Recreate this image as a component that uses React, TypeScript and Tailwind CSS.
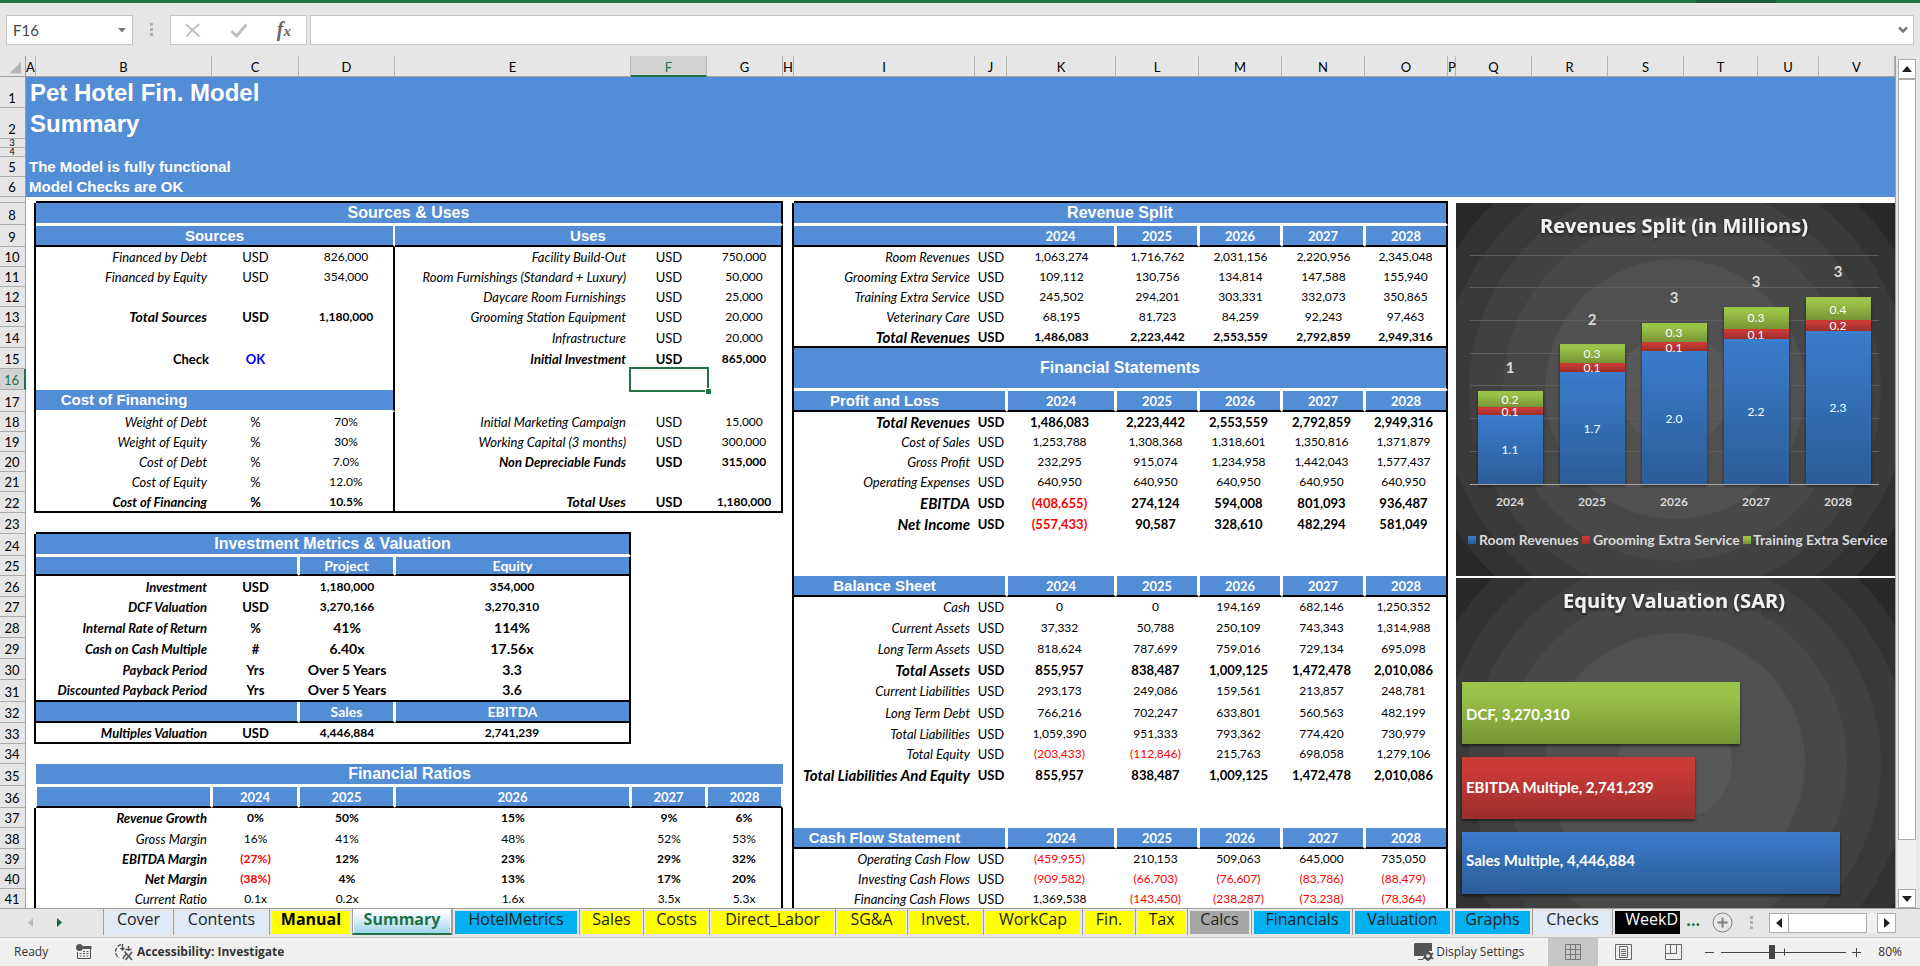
import type { ReactNode } from "react";

type Cell = { t?: ReactNode; c?: string; s?: number; r?: number };

const BLUE = "bg-[#538dd5] text-white font-bold";
const TITLE = "bg-[#538dd5] text-white font-bold text-center font-['Liberation_Sans',sans-serif]";
const LABEL = "text-right italic pr-[5px]";
const NUM = "text-center";
const ACC = "text-center pr-1";
const RIGHT_EDGE = "border-r-2 border-r-black";

const columns: [string, string][] = [
  ["A", "w-[10px]"],
  ["B", "w-[176px]"],
  ["C", "w-[87px]"],
  ["D", "w-[96px]"],
  ["E", "w-[236px]"],
  ["F", "w-[76px]"],
  ["G", "w-[76px]"],
  ["H", "w-[11px]"],
  ["I", "w-[181px]"],
  ["J", "w-[32px]"],
  ["K", "w-[109px]"],
  ["L", "w-[83px]"],
  ["M", "w-[83px]"],
  ["N", "w-[83px]"],
  ["O", "w-[83px]"],
  ["P", "w-[8px]"],
  ["Q", "w-[76px]"],
  ["R", "w-[76px]"],
  ["S", "w-[76px]"],
  ["T", "w-[74px]"],
  ["U", "w-[61px]"],
  ["V", ""],
];

const tall = "h-[22px]";
const mid = "h-[21px]";
const low = "h-[20px]";
const rowHeights: Record<number, string> = {
  1: "h-[31px]", 2: "h-[31px]", 3: "h-[9px]", 4: "h-[9px]", 5: low, 6: low, 7: "h-[6px]",
  8: tall, 9: tall, 10: low, 11: low, 12: low, 13: low, 14: mid, 15: mid, 16: mid, 17: tall,
  18: low, 19: low, 20: low, 21: low, 22: mid, 23: mid, 24: tall, 25: low, 26: mid, 27: low,
  28: mid, 29: mid, 30: mid, 31: tall, 32: mid, 33: mid, 34: low, 35: tall, 36: tall, 37: low,
  38: mid, 39: low, 40: low, 41: low,
};

const years = ["2024", "2025", "2026", "2027", "2028"];

/* ---------- left block: columns B to G ---------- */

const B = "font-bold";
const triple = (label: string, unit: string, value: string, bold?: string, edge?: string): Cell[] => [
  { t: label, c: `${LABEL} ${bold ?? ""} ${label.startsWith("Total") ? "text-[14px]" : "text-[13px]"}` },
  { t: unit, c: `${NUM} text-[13px] ${bold ?? ""}` },
  { t: value, c: `${NUM} ${bold ?? ""} ${edge ?? ""}` },
];
const none = (edge: string): Cell[] => [{}, {}, { c: edge }];
const src = (l: string, u: string, v: string, b?: string) => triple(l, u, v, b, RIGHT_EDGE);
const metric = (label: string, unit: string, project: string, equity: string, size?: string): Cell[] => [
  { t: label, c: `${LABEL} text-[13px] font-bold` },
  { t: unit, c: `${NUM} text-[13px] font-bold` },
  { t: project, c: `${NUM} font-bold ${size ?? ""}` },
  { t: equity, c: `${NUM} font-bold ${size ?? ""} ${RIGHT_EDGE}` },
  { s: 2 },
];
const ratio = (label: string, values: string[], bold?: string): Cell[] => [
  { t: label, c: `${LABEL} text-[13px] ${bold ?? ""}` },
  ...values.map((v, i) => ({
    t: v,
    c: `${NUM} ${bold ?? ""} ${v.startsWith("(") ? "text-[#ff0000]" : ""} ${i === 4 ? RIGHT_EDGE : ""}`,
  })),
];
const SUB = `${BLUE} text-center text-[13px] border-b-2 border-b-black`;
const SUB_WIDE = `${BLUE} text-center text-[14px] border-b-2 border-b-black`;

const left: Record<number, Cell[]> = {
  7: [{ s: 6, c: "border-b-2 border-b-black" }],
  8: [{ t: "Sources & Uses", s: 6, c: `${TITLE} text-[16px] border-b-2 border-b-white ${RIGHT_EDGE}` }],
  9: [
    { t: "Sources", s: 3, c: `${TITLE} text-[15px] border-t border-t-white border-b-2 border-b-black border-r-2 border-r-white` },
    { t: "Uses", s: 3, c: `${TITLE} text-[15px] border-t border-t-white border-b-2 border-b-black ${RIGHT_EDGE}` },
  ],
  10: [...src("Financed by Debt", "USD", "826,000"), ...src("Facility Build-Out", "USD", "750,000")],
  11: [...src("Financed by Equity", "USD", "354,000"), ...src("Room Furnishings (Standard + Luxury)", "USD", "50,000")],
  12: [...none(RIGHT_EDGE), ...src("Daycare Room Furnishings", "USD", "25,000")],
  13: [...src("Total Sources", "USD", "1,180,000", B), ...src("Grooming Station Equipment", "USD", "20,000")],
  14: [...none(RIGHT_EDGE), ...src("Infrastructure", "USD", "20,000")],
  15: [
    { t: "Check", c: "text-right font-bold pr-[3px] text-[13px]" },
    { t: "OK", c: `${NUM} text-[13px] font-bold text-[#0000ff]` },
    { c: RIGHT_EDGE },
    ...src("Initial Investment", "USD", "865,000", B),
  ],
  16: [
    ...none(RIGHT_EDGE),
    {},
    {
      c: "relative",
      t: (
        <span className="absolute -inset-0.5 z-10 border-2 border-[#217346]">
          <span className="absolute -right-1 -bottom-1 size-[6px] border-t border-l border-white bg-[#217346]" />
        </span>
      ),
    },
    { c: RIGHT_EDGE },
  ],
  17: [
    { t: "Cost of Financing", c: `${TITLE} text-[15px] border-b-2 border-b-white` },
    { s: 2, c: `bg-[#538dd5] border-b-2 border-b-white ${RIGHT_EDGE}` },
    ...none(RIGHT_EDGE),
  ],
  18: [...src("Weight of Debt", "%", "70%"), ...src("Initial Marketing Campaign", "USD", "15,000")],
  19: [...src("Weight of Equity", "%", "30%"), ...src("Working Capital (3 months)", "USD", "300,000")],
  20: [...src("Cost of Debt", "%", "7.0%"), ...src("Non Depreciable Funds", "USD", "315,000", B)],
  21: [...src("Cost of Equity", "%", "12.0%"), ...none(RIGHT_EDGE)],
  22: [...src("Cost of Financing", "%", "10.5%", B), ...src("Total Uses", "USD", "1,180,000", B)].map((x) => ({
    ...x,
    c: `${x.c} border-b-2 border-b-black`,
  })),
  23: [{ s: 4, c: "border-b-2 border-b-black" }, { s: 2 }],
  24: [
    { t: "Investment Metrics & Valuation", s: 4, c: `${TITLE} text-[16px] border-b-2 border-b-white ${RIGHT_EDGE}` },
    { s: 2 },
  ],
  25: [
    { s: 2, c: `${SUB_WIDE} border-t border-t-white border-r-2 border-r-white` },
    { t: "Project", c: `${SUB_WIDE} border-t border-t-white border-x-2 border-l border-x-white` },
    { t: "Equity", c: `${SUB_WIDE} border-t border-t-white border-l border-l-white ${RIGHT_EDGE}` },
    { s: 2 },
  ],
  26: metric("Investment", "USD", "1,180,000", "354,000"),
  27: metric("DCF Valuation", "USD", "3,270,166", "3,270,310"),
  28: metric("Internal Rate of Return", "%", "41%", "114%", "text-[14px]"),
  29: metric("Cash on Cash Multiple", "#", "6.40x", "17.56x", "text-[14px]"),
  30: metric("Payback Period", "Yrs", "Over 5 Years", "3.3", "text-[14px]"),
  31: metric("Discounted Payback Period", "Yrs", "Over 5 Years", "3.6", "text-[14px]").map((x, i) =>
    i < 4 ? { ...x, c: `${x.c} border-b-2 border-b-black` } : x
  ),
  32: [
    { s: 2, c: `${SUB_WIDE} border-r-2 border-r-white` },
    { t: "Sales", c: `${SUB_WIDE} border-x-2 border-l border-x-white` },
    { t: "EBITDA", c: `${SUB_WIDE} border-l border-l-white ${RIGHT_EDGE}` },
    { s: 2 },
  ],
  33: metric("Multiples Valuation", "USD", "4,446,884", "2,741,239").map((x, i) =>
    i < 4 ? { ...x, c: `${x.c} border-b-2 border-b-black` } : x
  ),
  34: [{ s: 6 }],
  35: [{ t: "Financial Ratios", s: 6, c: `${TITLE} text-[16px] border-b-2 border-b-white` }],
  36: [
    { c: `${SUB} border-t border-t-white border-x-2 border-l border-x-white` },
    ...years.map((y) => ({ t: y, c: `${SUB} border-t border-t-white border-x-2 border-l border-x-white` })),
  ],
  37: ratio("Revenue Growth", ["0%", "50%", "15%", "9%", "6%"], B),
  38: ratio("Gross Margin", ["16%", "41%", "48%", "52%", "53%"]),
  39: ratio("EBITDA Margin", ["(27%)", "12%", "23%", "29%", "32%"], B),
  40: ratio("Net Margin", ["(38%)", "4%", "13%", "17%", "20%"], B),
  41: ratio("Current Ratio", ["0.1x", "0.2x", "1.6x", "3.5x", "5.3x"]),
};

/* ---------- right block: columns I to O ---------- */

const line = (label: string, text: string, opt: { bold?: boolean; plain?: boolean; end?: boolean } = {}): Cell[] => {
  const w = opt.bold ? (opt.plain ? "font-bold" : "font-bold text-[13px]") : "";
  const lw = opt.bold ? "font-bold text-[15px]" : "text-[13px]";
  const e = opt.end ? "border-b-2 border-b-black" : "";
  return [
    { t: label, c: `${LABEL} ${lw} ${e}` },
    { t: "USD", c: `${NUM} text-[13px] ${opt.bold ? "font-bold" : ""} ${e}` },
    ...text.split(" ").map((v, i) => ({
      t: v,
      c: `${opt.plain ? NUM : ACC} ${w} ${e} ${v.startsWith("(") ? "text-[#ff0000]" : ""} ${i === 4 ? RIGHT_EDGE : ""}`,
    })),
  ];
};
const head = (title: string, top: string): Cell[] => [
  { t: title, c: `${TITLE} text-[15px] border-b-2 border-b-black ${top}` },
  { c: `bg-[#538dd5] border-b-2 border-b-black border-r-2 border-r-white ${top}` },
  ...years.map((y, i) => ({
    t: y,
    c: `${SUB} ${top} border-l border-l-white ${i === 4 ? RIGHT_EDGE : "border-r-2 border-r-white"}`,
  })),
];
const gap: Cell[] = [{ s: 7, c: RIGHT_EDGE }];

const right: Record<number, Cell[]> = {
  7: [{ s: 7, c: "border-b-2 border-b-black" }],
  8: [{ t: "Revenue Split", s: 7, c: `${TITLE} text-[16px] border-b-2 border-b-white ${RIGHT_EDGE}` }],
  9: [
    { s: 2, c: "bg-[#538dd5] border-t border-t-white border-b-2 border-b-black" },
    ...years.map((y, i) => ({
      t: y,
      c: `${SUB} border-t border-t-white ${i > 0 ? "border-l border-l-white" : ""} ${i === 4 ? RIGHT_EDGE : "border-r-2 border-r-white"}`,
    })),
  ],
  10: line("Room Revenues", "1,063,274 1,716,762 2,031,156 2,220,956 2,345,048", { plain: true }),
  11: line("Grooming Extra Service", "109,112 130,756 134,814 147,588 155,940", { plain: true }),
  12: line("Training Extra Service", "245,502 294,201 303,331 332,073 350,865", { plain: true }),
  13: line("Veterinary Care", "68,195 81,723 84,259 92,243 97,463", { plain: true }),
  14: line("Total Revenues", "1,486,083 2,223,442 2,553,559 2,792,859 2,949,316", { plain: true, bold: true, end: true }),
  15: [{ t: "Financial Statements", s: 7, r: 2, c: `${TITLE} text-[16px] border-b-2 border-b-white ${RIGHT_EDGE}` }],
  16: [],
  17: head("Profit and Loss", "border-t border-t-white"),
  18: line("Total Revenues", "1,486,083 2,223,442 2,553,559 2,792,859 2,949,316", { bold: true }),
  19: line("Cost of Sales", "1,253,788 1,308,368 1,318,601 1,350,816 1,371,879"),
  20: line("Gross Profit", "232,295 915,074 1,234,958 1,442,043 1,577,437"),
  21: line("Operating Expenses", "640,950 640,950 640,950 640,950 640,950"),
  22: line("EBITDA", "(408,655) 274,124 594,008 801,093 936,487", { bold: true }),
  23: line("Net Income", "(557,433) 90,587 328,610 482,294 581,049", { bold: true }),
  24: gap,
  25: gap,
  26: head("Balance Sheet", ""),
  27: line("Cash", "0 0 194,169 682,146 1,250,352"),
  28: line("Current Assets", "37,332 50,788 250,109 743,343 1,314,988"),
  29: line("Long Term Assets", "818,624 787,699 759,016 729,134 695,098"),
  30: line("Total Assets", "855,957 838,487 1,009,125 1,472,478 2,010,086", { bold: true }),
  31: line("Current Liabilities", "293,173 249,086 159,561 213,857 248,781"),
  32: line("Long Term Debt", "766,216 702,247 633,801 560,563 482,199"),
  33: line("Total Liabilities", "1,059,390 951,333 793,362 774,420 730,979"),
  34: line("Total Equity", "(203,433) (112,846) 215,763 698,058 1,279,106"),
  35: line("Total Liabilities And Equity", "855,957 838,487 1,009,125 1,472,478 2,010,086", { bold: true }),
  36: gap,
  37: gap,
  38: head("Cash Flow Statement", ""),
  39: line("Operating Cash Flow", "(459,955) 210,153 509,063 645,000 735,050"),
  40: line("Investing Cash Flows", "(909,582) (66,703) (76,607) (83,786) (88,479)"),
  41: line("Financing Cash Flows", "1,369,538 (143,450) (238,287) (73,238) (78,364)"),
};

const banner: Record<number, [string, string]> = {
  1: ["Pet Hotel Fin. Model", "text-[24px] leading-7 pl-1"],
  2: ["Summary", "text-[24px] leading-7 pl-1"],
  3: ["", ""],
  4: ["", ""],
  5: ["The Model is fully functional", "text-[15px] pl-[3px]"],
  6: ["Model Checks are OK", "text-[15px] pl-[3px]"],
};

const aEdge = (n: number) => (n >= 8 && n <= 22) || (n >= 24 && n <= 33) || n >= 37;

/* ---------- charts ---------- */

function Gradients({ id }: { id: string }) {
  return (
    <defs>
      <linearGradient id={`${id}-blue`} x1="0" y1="0" x2="0" y2="1">
        <stop offset="0" stopColor="#3a7ccb" />
        <stop offset="1" stopColor="#2c5d98" />
      </linearGradient>
      <linearGradient id={`${id}-red`} x1="0" y1="0" x2="0" y2="1">
        <stop offset="0.2" stopColor="#cb3a36" />
        <stop offset="1" stopColor="#9b2d2a" />
      </linearGradient>
      <linearGradient id={`${id}-green`} x1="0" y1="0" x2="0" y2="1">
        <stop offset="0.2" stopColor="#9bc348" />
        <stop offset="1" stopColor="#769535" />
      </linearGradient>
      <filter id={`${id}-shadow`} x="-10%" y="-10%" width="120%" height="130%">
        <feDropShadow dx="0" dy="2" stdDeviation="1.5" floodColor="#000000" floodOpacity="0.55" />
      </filter>
    </defs>
  );
}

function Rings({ cy }: { cy: number }) {
  const rings: [number, string][] = [
    [260, "#323232"],
    [234, "#3a3a3a"],
    [206, "#414141"],
    [172, "#484848"],
    [130, "#505050"],
    [57, "#585858"],
  ];
  return (
    <g>
      <rect width="439" height="400" fill="#282828" />
      {rings.map(([r, fill]) => (
        <circle key={r} cx="219" cy={cy} r={r} fill={fill} />
      ))}
    </g>
  );
}

const bars = [
  { x: 22, year: "2024", tops: [188, 204, 212], v: ["0.2", "0.1", "1.1"], ly: [197, 209, 247], total: "1", ty: 165 },
  { x: 104, year: "2025", tops: [141, 160, 169], v: ["0.3", "0.1", "1.7"], ly: [151, 165, 226], total: "2", ty: 117 },
  { x: 186, year: "2026", tops: [120, 139, 148], v: ["0.3", "0.1", "2.0"], ly: [130, 145, 216], total: "3", ty: 95 },
  { x: 268, year: "2027", tops: [104, 126, 136], v: ["0.3", "0.1", "2.2"], ly: [115, 132, 209], total: "3", ty: 79 },
  { x: 350, year: "2028", tops: [94, 117, 128], v: ["0.4", "0.2", "2.3"], ly: [107, 123, 205], total: "3", ty: 69 },
];

const CHART_TITLE = "font-['Open_Sans',sans-serif] text-[20px] font-bold";

function RevenueChart() {
  return (
    <svg viewBox="0 0 439 373" className="block h-[373px] w-full" role="img" aria-label="Revenues Split (in Millions)">
      <Gradients id="rev" />
      <Rings cy={186} />
      <g stroke="#5e5e5e">
        {[52, 84, 117, 150, 182, 215, 248].map((y) => (
          <line key={y} x1="14" x2="423" y1={y + 0.5} y2={y + 0.5} />
        ))}
      </g>
      <text x="218" y="30" className={CHART_TITLE} fill="#f2f2f2" textAnchor="middle" filter="url(#rev-shadow)">
        Revenues Split (in Millions)
      </text>
      {bars.map((b) => (
        <g key={b.year} textAnchor="middle">
          <g filter="url(#rev-shadow)">
            <rect x={b.x} y={b.tops[0]} width="65" height={b.tops[1] - b.tops[0]} fill="url(#rev-green)" />
            <rect x={b.x} y={b.tops[1]} width="65" height={b.tops[2] - b.tops[1]} fill="url(#rev-red)" />
            <rect x={b.x} y={b.tops[2]} width="65" height={281 - b.tops[2]} fill="url(#rev-blue)" />
          </g>
          <g fontSize="12" fill="#ffffff">
            {b.v.map((v, i) => (
              <text key={i} x={b.x + 32} y={b.ly[i] + 4}>
                {v}
              </text>
            ))}
          </g>
          <g fontWeight="700" fill="#d9d9d9">
            <text x={b.x + 32} y={b.ty + 5} fontSize="15">
              {b.total}
            </text>
            <text x={b.x + 32} y="303" fontSize="12">
              {b.year}
            </text>
          </g>
        </g>
      ))}
      <line x1="14" x2="423" y1="281.5" y2="281.5" stroke="#a6a6a6" />
      <g fontSize="14" fontWeight="700" fill="#d9d9d9">
        <rect x="12" y="333" width="8" height="8" fill="url(#rev-blue)" />
        <text x="23" y="342">Room Revenues</text>
        <rect x="126" y="333" width="8" height="8" fill="url(#rev-red)" />
        <text x="137" y="342">Grooming Extra Service</text>
        <rect x="287" y="333" width="8" height="8" fill="url(#rev-green)" />
        <text x="297" y="342">Training Extra Service</text>
      </g>
    </svg>
  );
}

function EquityChart() {
  const items = [
    { y: 104, ty: 142, w: 278, fill: "url(#eq-green)", label: "DCF, 3,270,310" },
    { y: 179, ty: 215, w: 233, fill: "url(#eq-red)", label: "EBITDA Multiple, 2,741,239" },
    { y: 254, ty: 288, w: 378, fill: "url(#eq-blue)", label: "Sales Multiple, 4,446,884" },
  ];
  return (
    <svg viewBox="0 0 439 331" className="block h-[331px] w-full" role="img" aria-label="Equity Valuation (SAR)">
      <Gradients id="eq" />
      <Rings cy={185} />
      <text x="218" y="30" className={CHART_TITLE} fill="#f2f2f2" textAnchor="middle" filter="url(#eq-shadow)">
        Equity Valuation (SAR)
      </text>
      {items.map((b) => (
        <g key={b.label}>
          <rect x="6" y={b.y} width={b.w} height="62" fill={b.fill} filter="url(#eq-shadow)" />
          <text x="10" y={b.ty} fontSize="15" fontWeight="700" fill="#ffffff">
            {b.label}
          </text>
        </g>
      ))}
    </svg>
  );
}

/* ---------- sheet ---------- */

function Cells({ cells }: { cells: Cell[] }) {
  return (
    <>
      {cells.map((x, i) => (
        <td key={i} colSpan={x.s} rowSpan={x.r} className={`p-0 leading-4 whitespace-nowrap ${x.c ?? ""}`}>
          {x.t}
        </td>
      ))}
    </>
  );
}

function RowHeader({ n }: { n: number }) {
  const selected = n === 16;
  const tiny = n === 3 || n === 4;
  return (
    <th
      scope="row"
      className={`p-0 pr-px text-center align-bottom text-[13px] font-normal border-b border-b-[#ababab] ${
        selected
          ? "border-r-2 border-r-[#217346] bg-[#d2d2d2] text-[#217346]"
          : "border-r border-r-[#9f9f9f] bg-[#e6e6e6] text-black"
      }`}
    >
      {n !== 7 && <div className={tiny ? "text-[9px] leading-[8px]" : "leading-[18px]"}>{n}</div>}
    </th>
  );
}

function Sheet() {
  return (
    <table className="w-full table-fixed border-separate border-spacing-0 bg-white text-[12px] text-black">
      <colgroup>
        <col className="w-[26px]" />
        {columns.map(([name, w]) => (
          <col key={name} className={w} />
        ))}
      </colgroup>
      <thead>
        <tr className="h-[21px] bg-[#e6e6e6]">
          <td className="border-r border-b border-[#9f9f9f] p-0">
            <svg viewBox="0 0 26 20" className="block h-[19px] w-full" aria-hidden="true">
              <path d="M22 5v12H10z" fill="#b4b4b4" />
            </svg>
          </td>
          {columns.map(([name]) => (
            <th
              key={name}
              scope="col"
              className={`px-0 pt-0.5 pb-0 text-center text-[13px] leading-4 font-normal border-r border-r-[#b4b4b4] ${
                name === "F"
                  ? "border-b-2 border-b-[#217346] bg-[#d2d2d2] text-[#217346]"
                  : "border-b border-b-[#9f9f9f]"
              }`}
            >
              {name}
            </th>
          ))}
        </tr>
      </thead>
      <tbody>
        {Object.keys(rowHeights).map((key) => {
          const n = Number(key);
          return (
            <tr key={n} className={rowHeights[n]}>
              <RowHeader n={n} />
              {banner[n] ? (
                <td
                  colSpan={22}
                  className={`bg-[#538dd5] p-0 font-['Liberation_Sans',sans-serif] leading-4 font-bold text-white ${banner[n][1]}`}
                >
                  {banner[n][0]}
                </td>
              ) : (
                <>
                  <td className={`p-0 ${aEdge(n) ? RIGHT_EDGE : ""}`} />
                  <Cells cells={left[n]} />
                  <td className={`p-0 ${n >= 8 ? RIGHT_EDGE : ""}`} />
                  <Cells cells={right[n]} />
                  <td className="p-0" />
                  {n === 7 && <td colSpan={6} className="p-0" />}
                  {n === 8 && (
                    <td colSpan={6} rowSpan={18} className="bg-[#282828] p-0 align-top">
                      <RevenueChart />
                    </td>
                  )}
                  {n === 26 && (
                    <td colSpan={6} rowSpan={16} className="border-t-2 border-t-white bg-[#282828] p-0 align-top">
                      <EquityChart />
                    </td>
                  )}
                </>
              )}
            </tr>
          );
        })}
      </tbody>
    </table>
  );
}

/* ---------- window chrome ---------- */

function FormulaBar() {
  return (
    <div className="flex h-[53px] shrink-0 items-start bg-[#e6e6e6] pt-3 pr-1.5 pl-1.5">
      <div className="flex h-[30px] w-[127px] items-center border border-[#c6c6c6] bg-white">
        <input aria-label="Name Box" defaultValue="F16" className="w-24 pl-1.5 text-[15px] text-[#444444] outline-none" />
        <button aria-label="Name list" className="ml-auto pr-1.5">
          <svg width="8" height="5" aria-hidden="true">
            <path d="M0 0h8L4 4.500z" fill="#777777" />
          </svg>
        </button>
      </div>
      <svg width="37" height="30" aria-hidden="true">
        <path d="M17 8h3v3h-3zM17 13h3v3h-3zM17 18h3v3h-3z" fill="#b0b0b0" />
      </svg>
      <div className="flex h-[30px] w-[137px] items-center justify-between border border-[#c6c6c6] bg-white pr-[15px] pl-3.5">
        <button aria-label="Cancel">
          <svg width="16" height="15" className="block" aria-hidden="true">
            <path d="M1 1.500c4 3 9 8 13.500 12M14.500 1C9 5 5 9 1.500 13.500" stroke="#c0c0c0" strokeWidth="2" fill="none" />
          </svg>
        </button>
        <button aria-label="Enter">
          <svg width="18" height="15" className="block" aria-hidden="true">
            <path d="M1.500 8l5 5L16.500 1.500" stroke="#c0c0c0" strokeWidth="3" fill="none" />
          </svg>
        </button>
        <button
          aria-label="Insert Function"
          className="font-['Liberation_Serif',serif] text-[20px] leading-5 font-bold text-[#666666] italic"
        >
          f<span className="text-[15px]">x</span>
        </button>
      </div>
      <div className="ml-[3px] flex h-[30px] flex-1 items-center border border-[#c6c6c6] bg-white">
        <input aria-label="Formula Bar" className="min-w-0 flex-1 px-2 text-[15px] outline-none" />
        <button aria-label="Expand Formula Bar" className="pr-[5px]">
          <svg width="10" height="8" aria-hidden="true">
            <path d="M1 1.500L5 5.500l4-4" stroke="#777777" strokeWidth="2.500" fill="none" />
          </svg>
        </button>
      </div>
    </div>
  );
}

function VerticalScroll() {
  return (
    <div className="flex w-[25px] shrink-0 flex-col border-l border-[#9f9f9f] bg-[#e6e6e6] pt-[3px] pr-1 pl-0.5">
      <button aria-label="Scroll up" className="flex h-5 items-center justify-center border border-[#ababab] bg-white">
        <svg width="10" height="6" aria-hidden="true">
          <path d="M0 6h10L5 0z" fill="#1f1f1f" />
        </svg>
      </button>
      <div className="flex flex-1 flex-col bg-[#f0f0f0]">
        <div className="h-[94%] border border-[#ababab] bg-white" />
      </div>
      <button aria-label="Scroll down" className="flex h-[19px] items-center justify-center border border-[#ababab] bg-white">
        <svg width="10" height="6" aria-hidden="true">
          <path d="M0 0h10L5 6z" fill="#1f1f1f" />
        </svg>
      </button>
    </div>
  );
}

const YELLOW = "bg-[#ffff00] text-[#222222] text-center";
const CYAN = "bg-[#00b0f0] text-[#222222] text-center";
const PALE = "bg-[#e0eaf6] text-[#222222] text-center";
const tabs: [string, string, string][] = [
  ["Cover", "w-[65px]", PALE],
  ["Contents", "w-[91px]", PALE],
  ["Manual", "w-[78px]", "bg-[#ffff00] text-center font-bold text-black"],
  ["Summary", "w-[96px]", "bg-linear-to-b from-white to-[#9fd5ee] text-center font-bold text-[#217346]"],
  ["HotelMetrics", "w-[122px]", CYAN],
  ["Sales", "w-[59px]", YELLOW],
  ["Costs", "w-[61px]", YELLOW],
  ["Direct_Labor", "w-[121px]", YELLOW],
  ["SG&A", "w-[67px]", YELLOW],
  ["Invest.", "w-[71px]", YELLOW],
  ["WorkCap", "w-[94px]", YELLOW],
  ["Fin.", "w-[48px]", YELLOW],
  ["Tax", "w-[47px]", YELLOW],
  ["Calcs", "w-[59px]", "bg-[#a6a6a6] text-center text-[#222222]"],
  ["Financials", "w-[96px]", CYAN],
  ["Valuation", "w-[95px]", CYAN],
  ["Graphs", "w-[75px]", CYAN],
  ["Checks", "w-[75px]", PALE],
  ["WeekD", "w-[65px]", "bg-black pr-0.5 text-right text-white"],
];

function TabBar() {
  return (
    <div className="flex h-[30px] shrink-0 items-start border-t border-b border-t-[#9f9f9f] border-b-[#c6c6c6] bg-[#e6e6e6] font-['Open_Sans',sans-serif] text-[16px]">
      <div className="flex h-[27px] w-[103px] shrink-0 items-center gap-6 pl-7">
        <button aria-label="Previous sheet">
          <svg width="5" height="9" aria-hidden="true">
            <path d="M5 0v9L0 4.500z" fill="#b8b8b8" />
          </svg>
        </button>
        <button aria-label="Next sheet">
          <svg width="5" height="9" aria-hidden="true">
            <path d="M0 0v9l5-4.500z" fill="#0e6b39" />
          </svg>
        </button>
      </div>
      <nav className="flex min-w-0" aria-label="Sheets">
        {tabs.map(([name, w, tone]) => {
          const active = name === "Summary";
          return (
            <div
              key={name}
              className={
                active
                  ? "h-[26px] border-r border-b-2 border-l border-r-[#9f9f9f] border-b-[#217346] border-l-[#9f9f9f] bg-white px-px pt-0.5"
                  : "h-[26px] border-l border-[#9f9f9f] px-0.5 pt-0.5 last:pr-0"
              }
            >
              <button
                aria-current={active ? "page" : undefined}
                className={`block pb-1.5 leading-[17px] whitespace-nowrap ${active ? "h-[22px]" : "h-[23px]"} ${w} ${tone}`}
              >
                {name}
              </button>
            </div>
          );
        })}
      </nav>
      <button aria-label="More sheets" className="ml-2 leading-[22px] font-bold text-[#217346]">
        ...
      </button>
      <button aria-label="New sheet" className="ml-3 flex h-[27px] items-center">
        <svg width="21" height="21" fill="none" stroke="#7f7f7f" aria-hidden="true">
          <circle cx="10.500" cy="10.500" r="9.500" />
          <path d="M10.500 5.500v10M5.500 10.500h10" strokeWidth="2" />
        </svg>
      </button>
      <svg width="36" height="27" className="shrink-0" aria-hidden="true">
        <path d="M17 7h3v3h-3zM17 12h3v3h-3zM17 17h3v3h-3z" fill="#b0b0b0" />
      </svg>
      <div className="mt-1 mr-6 ml-auto flex h-5 w-[127px] shrink-0 bg-[#f0f0f0]">
        <button aria-label="Scroll left" className="flex w-5 items-center justify-center border border-[#ababab] bg-white">
          <svg width="6" height="10" aria-hidden="true">
            <path d="M6 0v10L0 5z" fill="#1f1f1f" />
          </svg>
        </button>
        <div className="w-[78px] border border-l-0 border-[#ababab] bg-white" />
        <button aria-label="Scroll right" className="ml-auto flex w-[19px] items-center justify-center border border-[#ababab] bg-white">
          <svg width="6" height="10" aria-hidden="true">
            <path d="M0 0v10l6-5z" fill="#1f1f1f" />
          </svg>
        </button>
      </div>
    </div>
  );
}

function StatusBar() {
  return (
    <footer className="flex h-7 shrink-0 items-center bg-[#f0f0f0] pr-[18px] pl-3.5 font-['Open_Sans',sans-serif] text-[12px] text-[#333333]">
      <span className="w-[62px]">Ready</span>
      <button aria-label="Record macro" className="w-[38px]">
        <svg width="16" height="16" fill="none" stroke="#555555" aria-hidden="true">
          <path d="M7 2h8.500v3H7z" fill="#555555" stroke="none" />
          <path d="M1.500 8v6.500h13V3" />
          <path d="M7 7.500h2M10.500 7.500h2M3.500 9.500h2M7 9.500h2M10.500 9.500h2M3.500 12h2M7 12h2M10.500 12h2" />
          <circle cx="3.500" cy="3.500" r="3.500" fill="#555555" stroke="none" />
        </svg>
      </button>
      <button className="flex items-center gap-[3px] font-bold">
        <svg width="20" height="18" fill="none" stroke="#555555" strokeWidth="1.400" aria-hidden="true">
          <path d="M7 1.500A7.500 7.500 0 0 0 5 15" strokeDasharray="4 1.500" />
          <path d="M8.500 1v6M6.500 5l2 2 2-2M14.500 3v5M11.500 6.500h6" />
          <path d="M9 16c1-3 2-4 3-5M10.500 8.500l7.500 8.500M18 9l-6.500 8" strokeWidth="1.600" />
        </svg>
        Accessibility: Investigate
      </button>
      <button className="ml-auto flex items-center gap-0.5">
        <svg width="20" height="18" aria-hidden="true">
          <path d="M1 0h17v8h-4l-5 5H0V1zM4 16h5v1H4z" fill="#555555" />
          <circle cx="14" cy="13" r="3.300" fill="none" stroke="#555555" strokeWidth="2" />
          <path d="M14 7.500v11M8.800 10.200l10.400 5.600M8.800 15.800l10.400-5.600" stroke="#555555" strokeWidth="1.800" />
          <circle cx="14" cy="13" r="1.800" fill="#f0f0f0" />
        </svg>
        Display Settings
      </button>
      <div className="ml-6 flex self-stretch">
        <button aria-label="Normal view" aria-pressed="true" className="flex w-[50px] items-center justify-center bg-[#c6c6c6]">
          <svg width="16" height="16" fill="none" stroke="#777777" aria-hidden="true">
            <path d="M.5.5h15v15H.5zM5.500.5v15M10.500.5v15M.5 5.500h15M.5 10.500h15" />
          </svg>
        </button>
        <button aria-label="Page layout view" className="flex w-[50px] items-center justify-center">
          <svg width="17" height="16" fill="none" stroke="#666666" aria-hidden="true">
            <path d="M.5.5h16v15H.5zM4.500 2.500h8v11h-8zM6 5.500h5M6 7.500h5M6 9.500h5M6 11.500h5" />
          </svg>
        </button>
        <button aria-label="Page break preview" className="flex w-[50px] items-center justify-center">
          <svg width="17" height="16" fill="none" stroke="#666666" aria-hidden="true">
            <path d="M.5.5h16v15H.5zM5.500.5v9M11.500.5v9M.5 9.500h11" />
          </svg>
        </button>
      </div>
      <button aria-label="Zoom out" className="ml-[7px]">
        <svg width="9" height="9" aria-hidden="true">
          <path d="M0 4.500h9" stroke="#444444" />
        </svg>
      </button>
      <div className="relative ml-[7px] flex items-center">
        <input
          type="range"
          aria-label="Zoom"
          min={0}
          max={100}
          defaultValue={40}
          className="h-4 w-[125px] appearance-none bg-transparent [&::-webkit-slider-runnable-track]:h-px [&::-webkit-slider-runnable-track]:bg-[#444444] [&::-webkit-slider-thumb]:-mt-[7px] [&::-webkit-slider-thumb]:h-[14px] [&::-webkit-slider-thumb]:w-[6px] [&::-webkit-slider-thumb]:appearance-none [&::-webkit-slider-thumb]:bg-[#444444]"
        />
        <span className="pointer-events-none absolute top-1/2 left-1/2 h-[7px] w-px -translate-y-1/2 bg-[#444444]" />
      </div>
      <button aria-label="Zoom in" className="ml-[6px]">
        <svg width="9" height="9" aria-hidden="true">
          <path d="M0 4.500h9M4.500 0v9" stroke="#444444" />
        </svg>
      </button>
      <span className="ml-[17px]">80%</span>
    </footer>
  );
}

export default function App() {
  return (
    <div className="flex h-screen flex-col overflow-hidden bg-[#e6e6e6] font-['Lato',sans-serif]">
      <div className="flex h-[3px] shrink-0 justify-end bg-[#217346] pr-36">
        <div className="w-20 bg-[#1a5c38]" />
      </div>
      <FormulaBar />
      <main className="flex min-h-0 flex-1">
        <div className="min-w-0 flex-1 overflow-hidden">
          <Sheet />
        </div>
        <VerticalScroll />
      </main>
      <TabBar />
      <StatusBar />
    </div>
  );
}
